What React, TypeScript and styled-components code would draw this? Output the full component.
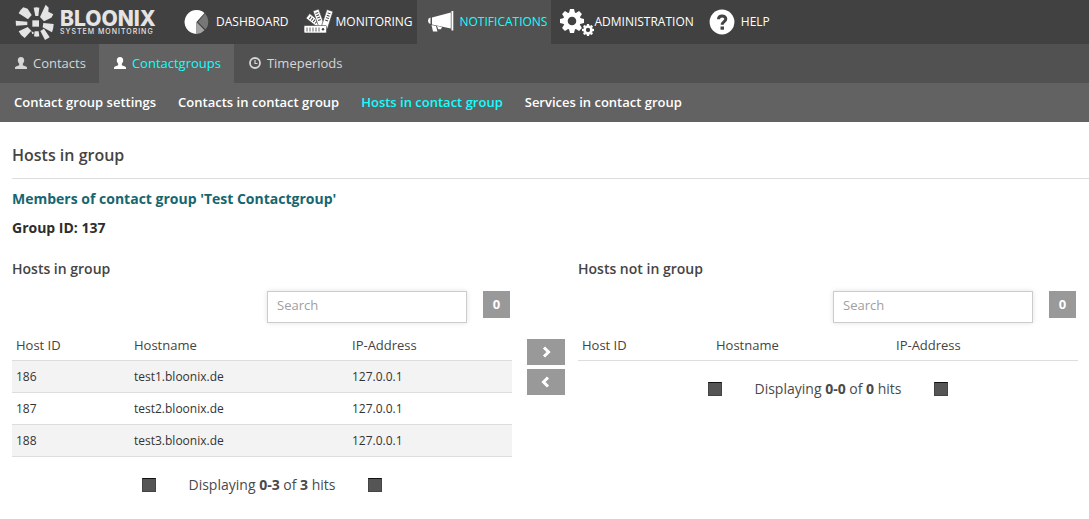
import React from "react";
import styled, { createGlobalStyle } from "styled-components";

const GlobalStyle = createGlobalStyle`
  * { box-sizing: border-box; }
  body {
    margin: 0;
    background: #fff;
    color: #444;
    font-family: "Open Sans", "Noto Sans", sans-serif;
    font-size: 13px;
    line-height: 20px;
  }
`;

const TopBar = styled.header`
  display: flex;
  height: 44px;
  background: #414141;
`;

const Brand = styled.a`
  display: flex;
  align-items: center;
  width: 173px;
  padding-left: 14px;
  gap: 4px;
  color: #e4e4e4;
  text-decoration: none;
`;

const BrandText = styled.span`
  display: flex;
  flex-direction: column;
  font-family: Inter, sans-serif;
  white-space: nowrap;
`;

const BrandName = styled.span`
  font-size: 21px;
  line-height: 20px;
  font-weight: 800;
`;

const BrandTag = styled.span`
  font-size: 7px;
  line-height: 6px;
  font-weight: 500;
  letter-spacing: 1px;
`;

const MainNav = styled.nav`
  display: flex;
`;

const MainLink = styled.a<{ $active?: boolean }>`
  display: flex;
  align-items: center;
  gap: 6px;
  padding: 0 4px 0 11px;
  background: ${(p) => (p.$active ? "#515151" : "transparent")};
  color: ${(p) => (p.$active ? "#1ff" : "#fff")};
  font-size: 12px;
  text-decoration: none;
  white-space: nowrap;
`;

const IconBox = styled.span`
  display: flex;
  width: 26px;
  color: #fff;

  svg {
    flex: none;
    overflow: visible;
  }
`;

const TabBar = styled.nav`
  display: flex;
  height: 39px;
  background: #515151;
`;

const Tab = styled.a<{ $active?: boolean }>`
  display: flex;
  align-items: center;
  gap: 5px;
  padding: 0 13px 1px 14px;
  background: ${(p) => (p.$active ? "#626262" : "transparent")};
  color: ${(p) => (p.$active ? "#1ff" : "#d6d6d6")};
  text-decoration: none;

  svg {
    color: ${(p) => (p.$active ? "#fff" : "#d6d6d6")};
  }
`;

const SubBar = styled.nav`
  display: flex;
  align-items: center;
  gap: 22px;
  height: 39px;
  padding: 0 14px 1px;
  background: #626262;
`;

const SubLink = styled.a<{ $active?: boolean }>`
  color: ${(p) => (p.$active ? "#1ff" : "#fff")};
  font-weight: 600;
  text-decoration: none;
`;

const Main = styled.main`
  padding: 22px 0 0 12px;
`;

const PageTitle = styled.h1`
  margin: 0 0 10px;
  padding-bottom: 12px;
  border-bottom: 1px solid #ddd;
  font-size: 16px;
  line-height: 22px;
  font-weight: 600;
`;

const GroupTitle = styled.h2`
  margin: 0 0 9px;
  color: #166670;
  font-size: 14px;
  line-height: 20px;
  font-weight: 700;
`;

const GroupId = styled.p`
  margin: 0 0 21px;
  color: #2d2d2d;
  font-size: 14px;
  line-height: 20px;
  font-weight: 700;
`;

const Columns = styled.div`
  display: grid;
  grid-template-columns: 1fr 66px 1fr;
  padding-right: 11px;
`;

const PanelTitle = styled.h3`
  margin: 0 0 12px;
  font-size: 14px;
  line-height: 20px;
  font-weight: 600;
`;

const Tools = styled.div`
  display: flex;
  justify-content: flex-end;
  gap: 16px;
  padding-right: 2px;
  margin-bottom: 7px;
`;

const SearchInput = styled.input`
  width: 200px;
  height: 32px;
  padding: 0 9px 4px;
  border: 1px solid #ccc;
  border-radius: 0;
  box-shadow: 0 0 5px rgba(0, 0, 0, 0.12);
  color: #444;
  font: inherit;

  &::placeholder {
    color: #a0a0a0;
    opacity: 1;
  }
`;

const CountButton = styled.button`
  width: 27px;
  height: 27px;
  padding: 0 0 1px;
  border: 0;
  background: #999;
  color: #fff;
  font: inherit;
  font-weight: 700;
`;

const HostTable = styled.table`
  width: 100%;
  table-layout: fixed;
  border-collapse: collapse;
  line-height: 20px;

  th,
  td {
    height: 32px;
    padding: 0 4px;
    border-bottom: 1px solid #ddd;
    text-align: left;
    font-weight: 400;
  }

  th {
    height: 30px;
    font-size: 13px;
  }

  td {
    padding-top: 2px;
    font-size: 12px;
    color: #333;
  }

  tbody tr:nth-child(odd) {
    background: #f3f3f3;
  }
`;

const Column = styled.col<{ $width?: number }>`
  width: ${(p) => (p.$width ? `${p.$width}px` : "auto")};
`;

const Pager = styled.div`
  display: flex;
  align-items: center;
  justify-content: center;
  gap: 33px;
  padding: 18px 0 20px;
  font-size: 14px;
  line-height: 20px;
  color: #4a4a4a;
`;

const PagerButton = styled.button`
  width: 14px;
  height: 14px;
  padding: 0;
  border: 1px solid #444;
  border-top-color: #111;
  background: #555;
`;

const MoveButtons = styled.div`
  display: flex;
  flex-direction: column;
  align-items: center;
  gap: 4px;
  padding: 80px 0 0 2px;
`;

const MoveButton = styled.button`
  display: flex;
  align-items: center;
  justify-content: center;
  width: 38px;
  height: 26px;
  padding: 0;
  border: 0;
  background: #999;
  color: #fff;
`;

function LogoMark() {
  return (
    <svg width="42" height="38" viewBox="0 0 126 114" aria-hidden="true" fill="currentColor">
      <path d="M55 52H75V71H55Z" />
      <path d="M59 14Q67 11 76 14L73 39H64Z" />
      <path d="M95 5L104 14L103 26L118 34L112 44L90 55L78 42Z" />
      <path d="M28 13L41 17L53 36L42 49L14 31Q19 20 28 13Z" />
      <path d="M5 53L40 56V66L6 68Z" />
      <path d="M14 85L41 72L52 83L32 105Q20 98 14 85Z" />
      <path d="M52 84L61 90L55 94Z" />
      <path d="M62 85H74L76 100Q68 102 60 100Z" />
      <path d="M79 84L90 77L107 103L93 111Z" />
      <path d="M88 60L119 63Q119 76 114 88L86 73Z" />
    </svg>
  );
}

function PieIcon() {
  return (
    <svg width="26" height="26" viewBox="0 0 26 26" aria-hidden="true">
      <path d="M12.5 13V25A12 12 0 1 1 20.5 4Z" fill="#fff" />
      <path d="M21 4.500A12 12 0 0 1 21.500 20.500L14 13Z" fill="#777" />
      <path d="M13 13.500L20.500 21.300A12 12 0 0 1 13 25Z" fill="#a5a5a5" />
    </svg>
  );
}

function SwatchIcon() {
  return (
    <svg width="27" height="24" viewBox="0 0 27 24" aria-hidden="true" fill="#fff">
      <g stroke="#414141" strokeWidth="0.600">
        <g transform="rotate(-52 18 17)">
          <path d="M15 -1H21V17H15Z" />
          <path d="M16.500 2H19.500M16.500 4.500H19.500M16.500 7H19.500M16.500 9.500H19.500" strokeWidth="1" />
        </g>
        <g transform="rotate(-20 18 17)">
          <path d="M15 -1H21V17H15Z" />
          <path d="M16.500 2H19.500M16.500 4.500H19.500M16.500 7H19.500M16.500 9.500H19.500" strokeWidth="1" />
        </g>
        <g transform="rotate(18 20 18)">
          <path d="M17 -0.500H23.500V18H17Z" />
          <path d="M18.700 2.500H21.700M18.700 5H21.700M18.700 7.500H21.700M18.700 10H21.700" strokeWidth="1" />
        </g>
      </g>
      <rect x="0" y="15.500" width="22.500" height="7.500" rx="1" stroke="#414141" strokeWidth="0.600" />
      <path d="M3 17.500V21.500M6 17.500V21.500M9 17.500V21.500M12 17.500V21.500M15 17.500V21.500" stroke="#666" strokeWidth="1" />
      <circle cx="19" cy="19.300" r="1.200" fill="#414141" />
    </svg>
  );
}

function MegaphoneIcon() {
  return (
    <svg width="26" height="22" viewBox="0 0 26 22" aria-hidden="true" fill="#fff">
      <path d="M22.800 1.500L4 6.500V13.500L22.800 17.500Z" />
      <rect x="23.500" y="0" width="1.800" height="19.500" />
      <path d="M2.500 6.500Q0 7 0 9.800T2.500 13Z" />
      <path d="M3.500 14L8 15L9.500 20.500H5Z" />
      <path d="M9 15L14 16L13 18.200H10.200Z" />
    </svg>
  );
}

function Gear({ x, y, size }: { x: number; y: number; size: number }) {
  return (
    <g transform={`translate(${x} ${y}) scale(${size / 12})`}>
      {[0, 45, 90, 135, 180, 225, 270, 315].map((a) => (
        <path key={a} transform={`rotate(${a})`} d="M-3 -8L-2 -12H2L3 -8Z" />
      ))}
      <circle r="6.600" fill="none" stroke="#fff" strokeWidth="4.600" />
    </g>
  );
}

function GearsIcon() {
  return (
    <svg width="26" height="26" viewBox="2 0 26 26" aria-hidden="true" fill="#fff">
      <Gear x={12} y={12} size={12} />
      <Gear x={28} y={21} size={6} />
    </svg>
  );
}

function HelpIcon() {
  return (
    <svg width="26" height="26" viewBox="0 0 26 26" aria-hidden="true">
      <circle cx="13" cy="13" r="12.400" fill="#fff" />
      <path d="M9.500 10.300C9.500 5.800 16.800 6 16.800 10C16.800 12.600 13.200 12.600 13.200 15.800" fill="none" stroke="#444" strokeWidth="3" />
      <rect x="11.500" y="17.500" width="3.500" height="3.200" fill="#444" />
    </svg>
  );
}

function UserIcon() {
  return (
    <svg width="14" height="14" viewBox="0 0 14 14" aria-hidden="true" fill="currentColor">
      <path d="M7 1C9.200 1 10.200 2.400 10.200 4.300C10.200 6 9.500 7 8.800 7.800V9.200L12 10.600Q13 11 13 12V13H1V12Q1 11 2 10.600L5.200 9.200V7.800C4.500 7 3.800 6 3.800 4.300C3.800 2.400 4.800 1 7 1Z" />
    </svg>
  );
}

function ClockIcon() {
  return (
    <svg width="14" height="14" viewBox="0 0 14 14" aria-hidden="true" fill="none" stroke="currentColor">
      <circle cx="7" cy="7" r="5" strokeWidth="1.800" />
      <path d="M7 4V7.500H9.500" strokeWidth="1.200" />
    </svg>
  );
}

function Chevron({ left }: { left?: boolean }) {
  return (
    <svg width="12" height="12" viewBox="0 0 12 12" aria-hidden="true" fill="none" stroke="currentColor" strokeWidth="3">
      <path d={left ? "M8 1.500L3.500 6L8 10.500" : "M4 1.500L8.500 6L4 10.500"} />
    </svg>
  );
}

type Host = { id: number; name: string; ip: string };

const hosts: Host[] = [
  { id: 186, name: "test1.bloonix.de", ip: "127.0.0.1" },
  { id: 187, name: "test2.bloonix.de", ip: "127.0.0.1" },
  { id: 188, name: "test3.bloonix.de", ip: "127.0.0.1" },
];

function HostPanel({ title, rows, widths }: { title: string; rows: Host[]; widths: number[] }) {
  return (
    <section>
      <PanelTitle>{title}</PanelTitle>
      <Tools>
        <SearchInput type="text" placeholder="Search" aria-label={`Search: ${title}`} />
        <CountButton type="button">0</CountButton>
      </Tools>
      <HostTable>
        <colgroup>
          <Column $width={widths[0]} />
          <Column $width={widths[1]} />
          <Column />
        </colgroup>
        <thead>
          <tr>
            <th scope="col">Host ID</th>
            <th scope="col">Hostname</th>
            <th scope="col">IP-Address</th>
          </tr>
        </thead>
        <tbody>
          {rows.map((h) => (
            <tr key={h.id}>
              <td>{h.id}</td>
              <td>{h.name}</td>
              <td>{h.ip}</td>
            </tr>
          ))}
        </tbody>
      </HostTable>
      <Pager>
        <PagerButton type="button" aria-label="Previous page" />
        <span>
          Displaying <b>{`0-${rows.length}`}</b> of <b>{rows.length}</b> hits
        </span>
        <PagerButton type="button" aria-label="Next page" />
      </Pager>
    </section>
  );
}

export default function App() {
  return (
    <>
      <GlobalStyle />
      <TopBar>
        <Brand href="#">
          <LogoMark />
          <BrandText>
            <BrandName>BLOONIX</BrandName>
            <BrandTag>SYSTEM MONITORING</BrandTag>
          </BrandText>
        </Brand>
        <MainNav>
          <MainLink href="#dashboard"><IconBox><PieIcon /></IconBox>DASHBOARD</MainLink>
          <MainLink href="#monitoring"><IconBox><SwatchIcon /></IconBox>MONITORING</MainLink>
          <MainLink href="#notifications" $active><IconBox><MegaphoneIcon /></IconBox>NOTIFICATIONS</MainLink>
          <MainLink href="#administration"><IconBox><GearsIcon /></IconBox>ADMINISTRATION</MainLink>
          <MainLink href="#help"><IconBox><HelpIcon /></IconBox>HELP</MainLink>
        </MainNav>
      </TopBar>
      <TabBar>
        <Tab href="#contacts"><UserIcon />Contacts</Tab>
        <Tab href="#contactgroups" $active><UserIcon />Contactgroups</Tab>
        <Tab href="#timeperiods"><ClockIcon />Timeperiods</Tab>
      </TabBar>
      <SubBar>
        <SubLink href="#settings">Contact group settings</SubLink>
        <SubLink href="#group-contacts">Contacts in contact group</SubLink>
        <SubLink href="#group-hosts" $active>Hosts in contact group</SubLink>
        <SubLink href="#group-services">Services in contact group</SubLink>
      </SubBar>
      <Main>
        <PageTitle>Hosts in group</PageTitle>
        <GroupTitle>Members of contact group 'Test Contactgroup'</GroupTitle>
        <GroupId>Group ID: 137</GroupId>
        <Columns>
          <HostPanel title="Hosts in group" rows={hosts} widths={[118, 218]} />
          <MoveButtons>
            <MoveButton type="button" aria-label="Remove from group"><Chevron /></MoveButton>
            <MoveButton type="button" aria-label="Add to group"><Chevron left /></MoveButton>
          </MoveButtons>
          <HostPanel title="Hosts not in group" rows={[]} widths={[134, 180]} />
        </Columns>
      </Main>
    </>
  );
}
